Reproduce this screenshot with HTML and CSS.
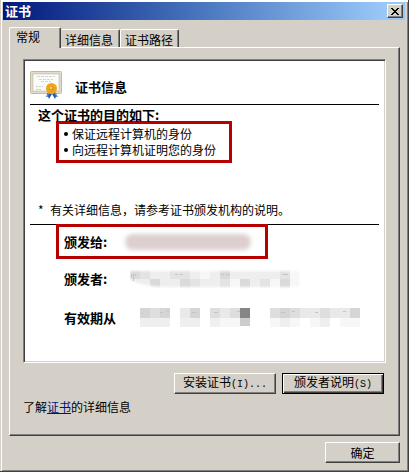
FILE: index.html
```html
<!DOCTYPE html>
<html lang="zh-CN">
<head>
<meta charset="utf-8">
<title>证书</title>
<link rel="stylesheet" href="styles.css">
</head>
<body>
<main class="window">
  <header class="titlebar">
    <h1 class="strong">证书</h1>
    <button class="close" type="button" aria-label="关闭">
      <svg width="8" height="7" viewBox="0 0 8 7" shape-rendering="crispEdges"><path d="M0 0h2v1h1v1h2v-1h1v-1h2v1h-1v1h-1v1h-1v1h1v1h1v1h1v1h-2v-1h-1v-1h-2v1h-1v1h-2v-1h1v-1h1v-1h1v-1h-1v-1h-1v-1h-1z"/></svg>
    </button>
  </header>
  <div class="tabs" role="tablist">
    <button class="tab selected" type="button" role="tab" aria-selected="true">常规</button>
    <button class="tab" type="button" role="tab" aria-selected="false">详细信息</button>
    <button class="tab" type="button" role="tab" aria-selected="false">证书路径</button>
  </div>
  <section class="panel" role="tabpanel">
    <div class="well">
      <div class="heading">
        <svg class="cert" width="32" height="28" viewBox="0 0 32 28">
          <rect x="0.5" y="0.5" width="31" height="22" rx="1" fill="#d8d0bd" stroke="#c3baa4"/>
          <rect x="1.5" y="1.5" width="29" height="20" fill="none" stroke="#eee8da" stroke-dasharray="1 1"/>
          <rect x="3" y="3" width="26" height="17" fill="#fbfbfa" stroke="#c9c2b2" stroke-width=".6"/>
          <path d="M7 5.500h18M9 8.500h14M11 10.500h10" stroke="#d3d5d7" stroke-dasharray="3 1"/>
          <path d="M6 15.500h7M6 18.500h6" stroke="#c3cad2" stroke-dasharray="2 1"/>
          <path d="M18 21l-2 5 2-.5 1 2.500 3-5zM25 21l3 5-2-.5-1 2.500-3-5z" fill="#2459ac"/>
          <path d="M18.500 22l-1 3M25 22l1.500 3" stroke="#79a5df"/>
          <circle cx="21.500" cy="17.500" r="5.500" fill="#eda51b"/>
          <circle cx="21.500" cy="17.500" r="2" fill="#dc941b"/>
          <circle cx="21" cy="17" r="1" fill="#ffe19a"/>
        </svg>
        <h2 class="strong">证书信息</h2>
      </div>
      <div class="purpose">
        <h3 class="strong">这个证书的目的如下:</h3>
        <ul class="marked uses">
          <li>保证远程计算机的身份</li>
          <li>向远程计算机证明您的身份</li>
        </ul>
        <p class="note"><span>*</span>有关详细信息，请参考证书颁发机构的说明。</p>
      </div>
      <dl class="facts">
        <div class="fact marked">
          <dt class="strong">颁发给:</dt>
          <dd class="subject"><span class="smudge"></span></dd>
        </div>
        <div class="fact">
          <dt class="strong">颁发者:</dt>
          <dd class="issuer">
            <svg width="170" height="20" viewBox="0 0 170 20">
              <defs><filter id="soft" x="-5%" y="-20%" width="110%" height="140%"><feGaussianBlur stdDeviation="1"/></filter>
              <mask id="stroke"><path d="M0 2h168q2 0 2 4v8q0 3-5 4H35q-20 0-35-7z" fill="#fff" filter="url(#soft)"/></mask></defs>
              <g mask="url(#stroke)" shape-rendering="crispEdges">
                <path fill="#eee" d="M0 0h170v20H0z"/>
                <path fill="#dadada" d="M0 0h10v10H0zM90 0h10v10H90zM20 10h10v10H20zM50 10h10v10H50zM110 10h10v10h-10zM150 10h10v10h-10z"/>
                <path fill="#e3e3e3" d="M10 0h10v10H10zM40 0h20v10H40zM60 10h10v10H60zM90 10h10v10H90zM130 10h10v10h-10zM150 0h10v10h-10z"/>
                <path fill="#f7f7f7" d="M70 0h10v10H70zM100 10h10v10h-10zM140 10h10v10h-10zM160 0h10v20h-10z"/>
              </g>
              <path d="M1.500 5v3M3.500 5v7M5.500 5v2M45 5.500h3M50 5.500h3M91 5.500h3M96 5.500h3M152 5.500h6" stroke="#c4c4c4"/>
            </svg>
          </dd>
        </div>
        <div class="fact">
          <dt class="strong">有效期从</dt>
          <dd class="period">
            <svg width="220" height="20" viewBox="0 0 220 20" shape-rendering="crispEdges">
              <path fill="#d5d5d5" d="M0 0h10v10H0zM20 0h10v10H20zM50 0h10v10H50zM140 0h10v10h-10zM210 0h10v10h-10z"/>
              <path fill="#dedede" d="M10 0h10v10H10zM70 0h10v10H70zM90 0h10v10H90zM130 0h10v10h-10zM150 0h10v10h-10zM180 0h10v10h-10z"/>
              <path fill="#e9e9e9" d="M40 0h10v10H40zM80 0h10v10H80zM160 0h20v10h-20zM190 0h20v10h-20z"/>
              <path fill="#858585" d="M100 0h10v10h-10z"/>
              <path fill="#ccc" d="M100 10h10v8h-10z"/>
              <path fill="#efefef" d="M0 10h30v9H0zM40 10h20v9H40zM70 10h10v9H70zM140 10h10v9h-10zM180 10h10v9h-10z"/>
              <path fill="#f7f7f7" d="M80 10h20v9H80zM130 10h10v9h-10zM150 10h10v9h-10zM170 10h10v9h-10zM200 10h20v9h-20z"/>
              <path d="M1 5.500h2M20 4.500h3M27 3.500h2M52 4.500h4M74 4.500h4M97 3.500h3M141 4.500h4M152 3.500h3M175 4.500h3M203 3.500h3" stroke="#c4c4c4"/>
            </svg>
          </dd>
        </div>
      </dl>
    </div>
    <div class="actions">
      <button class="btn" type="button">安装证书<span class="latin">(I)...</span></button>
      <button class="btn default" type="button">颁发者说明<span class="latin">(S)</span></button>
    </div>
    <p class="learn">了解<a href="#certificates">证书</a>的详细信息</p>
  </section>
  <footer class="footer"><button class="btn ok" type="button">确定</button></footer>
</main>
</body>
</html>
```
FILE: styles.css
```css
* { box-sizing: border-box; }
body, h1, h2, h3, p, ul, dl, dd { margin: 0; padding: 0; }
body {
  background: #d4d0c8;
  color: #000;
  font: 12px/16px "Noto Sans CJK SC", sans-serif;
}
button { font: inherit; color: inherit; background: #d4d0c8; border: 0; padding: 0; }
svg { display: block; }
.strong { font-size: 13px; line-height: 16px; font-weight: 700; }

.window {
  display: flex;
  flex-direction: column;
  min-height: 100vh;
  padding: 1px 1px 8px 2px;
  border-right: 1px solid #404040;
  border-bottom: 1px solid #404040;
  box-shadow: inset 1px 0 #d4d0c8, inset 2px 2px #fff, inset -1px -1px #808080;
}
.titlebar {
  display: flex;
  align-items: center;
  justify-content: space-between;
  height: 18px;
  margin: 1px 2px 7px 1px;
  padding: 0 2px;
  background: linear-gradient(to right, #00187b, #4a78c0 50%, #99c8f8 95%);
  color: #fff;
}
.close {
  display: grid;
  place-items: center;
  width: 16px;
  height: 14px;
  border: 1px solid;
  border-color: #fff #404040 #404040 #fff;
  box-shadow: inset -1px -1px #808080;
}

.tabs { display: flex; align-items: flex-end; height: 20px; padding-left: 7px; }
.tab {
  height: 18px;
  padding: 2px 0 0 4px;
  border: 1px solid;
  border-color: #fff #404040 transparent #fff;
  border-bottom: 0;
  border-radius: 2px 2px 0 0;
  box-shadow: inset -1px 0 #808080;
  text-align: left;
}
.tab + .tab { flex: 0 0 59px; }
.tab.selected {
  position: relative;
  flex: 0 0 52px;
  height: 21px;
  margin-bottom: -1px;
  padding: 0 0 2px 6px;
}
.tab.selected + .tab { border-left: 0; }

.panel {
  display: flex;
  flex-direction: column;
  flex: 1;
  margin: 0 7px 6px;
  padding: 11px 13px 20px 13px;
  border: 1px solid;
  border-color: #fff #404040 #404040 #fff;
  box-shadow: inset -1px -1px #808080;
}
.well {
  flex: 1;
  padding: 1px 6px 1px 6px;
  border: 1px solid;
  border-color: #808080 #fff #fff #808080;
  background: #fff;
  box-shadow: inset 1px 1px #404040, inset -1px -1px #d4d0c8;
}
.heading {
  display: flex;
  align-items: center;
  gap: 13px;
  height: 44px;
  padding-top: 4px;
  border-bottom: 1px solid #000;
}
.heading .strong { padding-top: 4px; }
.marked { border: 3px solid #b80000; }
.purpose { padding: 2px 0 6px 8px; }
.uses {
  width: 176px;
  margin: -2px 0 39px 18px;
  padding: 2px 0 2px 5px;
  list-style: none;
}
.uses li { display: flex; align-items: center; gap: 4px; white-space: nowrap; }
.uses li::before { content: ""; width: 4px; height: 4px; border-radius: 2px; background: #000; }
.note { display: flex; }
.note span { width: 12px; }
.facts { border-top: 1px solid #000; }
.fact {
  display: flex;
  align-items: center;
  height: 39px;
  margin-left: 26px;
  padding-left: 8px;
}
.fact.marked { width: 212px; height: 35px; margin-top: -1px; padding-left: 5px; }
dt { width: 61px; flex: none; }
.issuer { padding-left: 5px; }
.period { padding-left: 15px; }
.smudge {
  display: block;
  width: 126px;
  height: 16px;
  border-radius: 8px;
  background: #ddcfcf;
  filter: blur(2px);
}

.actions { display: flex; justify-content: flex-end; gap: 6px; margin: 10px 2px 5px 0; }
.btn {
  width: 102px;
  height: 21px;
  border: 1px solid;
  border-color: #fff #404040 #404040 #fff;
  box-shadow: inset -1px -1px #808080;
  white-space: nowrap;
}
.btn.default {
  border-color: #000;
  box-shadow: inset 1px 1px #fff, inset -1px -1px #404040, inset -2px -2px #808080;
}
.btn.ok { width: 75px; }
.latin { font: 10px/16px "Liberation Mono", monospace; }
.learn a { color: #00127b; }
.footer { display: flex; justify-content: flex-end; padding-right: 7px; }
```
